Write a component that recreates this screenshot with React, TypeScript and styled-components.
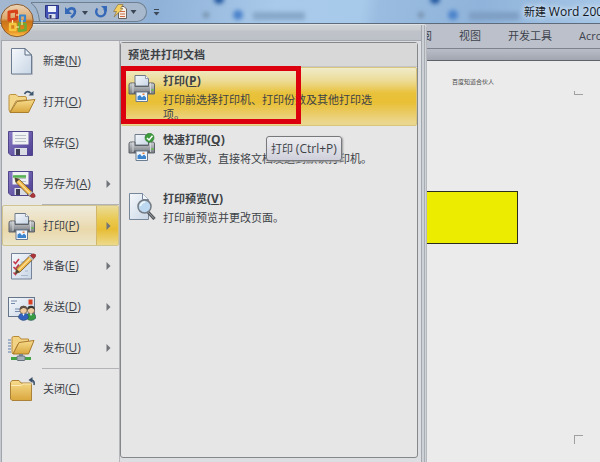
import React from 'react';
import styled, { createGlobalStyle } from 'styled-components';

const GlobalStyle = createGlobalStyle`
  * { box-sizing: border-box; }
  body { margin: 0; }
  body, button {
    font-family: "Open Sans", "Noto Sans CJK SC", sans-serif;
    font-size: 11px;
    color: #3d4247;
  }
  button { margin: 0; padding: 0; border: 0; background: none; text-align: left; }
`;

const Window = styled.div`
  position: relative;
  display: flex;
  flex-direction: column;
  min-height: 100vh;
  overflow: hidden;
  background: #ebebeb;
`;

const TitleBar = styled.header`
  position: relative;
  display: flex;
  align-items: center;
  height: 24px;
  padding-left: 31px;
  border-bottom: 1px solid #5d6b7b;
  background: linear-gradient(100deg, #a3b8d0 0%, #9db4ce 18%, #8fb1d8 26%, #9fc0e2 38%, #a9caea 46%, #a8caea 60%, #9abce0 63%, #8fb3da 80%, #a6c6e6 100%);
  overflow: hidden;
`;

const Glass = styled.svg`
  position: absolute;
  inset: 0;
`;

const QuickBar = styled.nav`
  position: relative;
  display: flex;
  align-items: center;
  flex: none;
  width: 116px;
  height: 20px;
  border: 1px solid #6f7f92;
  border-left: 0;
  border-radius: 0 10px 10px 0;
  background: linear-gradient(90deg, transparent 6px, #a8b9cd 6px);
`;

const BarCurve = styled.svg`
  flex: none;
  margin-right: 3px;
`;

const QuickButton = styled.button<{ $width: number }>`
  display: flex;
  align-items: center;
  justify-content: center;
  width: ${(p) => p.$width}px;
  height: 18px;
`;

const Title = styled.h1`
  position: relative;
  flex: 1;
  margin: 0 0 0 362px;
  font-size: 11px;
  font-weight: 400;
  line-height: 24px;
  white-space: nowrap;
  color: #10161e;
  text-shadow: 0 0 6px #e6f1fb, 0 0 4px #e6f1fb;
`;

const Latin = styled.span`
  font-size: 12px;
`;

const Customize = styled.button`
  position: relative;
  display: flex;
  flex: none;
  width: 9px;
  height: 18px;
  margin-left: 6px;
  align-items: center;
`;

const Tabs = styled.nav`
  display: flex;
  gap: 27px;
  height: 25px;
  padding-left: 410px;
  background: #bcc0ca;
  border-bottom: 1px solid #7d838c;
`;

const Tab = styled.button`
  flex: none;
  line-height: 24px;
  white-space: nowrap;
  color: #3c434d;
`;

const RibbonEdge = styled.div`
  height: 12px;
  background: linear-gradient(#b9bdc7, #a2a6b1);
  border-bottom: 1px solid #5f636a;
`;

const Page = styled.main`
  display: flex;
  flex: 1;
  flex-direction: column;
  align-items: stretch;
  padding: 16px 17px 18px 0;
`;

const PageHeader = styled.div`
  display: flex;
  justify-content: space-between;
  height: 18px;
  padding-left: 452px;
`;

const HeaderText = styled.span`
  font-size: 6px;
  line-height: 10px;
  color: #4a4a4a;
`;

const CropMark = styled.i<{ $corner: 'top' | 'bottom' }>`
  align-self: flex-end;
  width: 9px;
  height: ${(p) => (p.$corner === 'top' ? 4 : 9)}px;
  border-left: 1px solid #a0a0a0;
  border-top: ${(p) => (p.$corner === 'top' ? 0 : 1)}px solid #a0a0a0;
  border-bottom: ${(p) => (p.$corner === 'top' ? 1 : 0)}px solid #a0a0a0;
`;

const Shape = styled.div`
  width: 518px;
  height: 53px;
  margin: 96px 0 auto;
  border: 1px solid #2c2c1c;
  background: #ecec00;
`;

const OfficeMenu = styled.section`
  position: absolute;
  top: 24px;
  bottom: 0;
  left: 0;
  display: flex;
  flex-direction: column;
  width: 427px;
  padding: 0 6px 0 1px;
  border-top: 1px solid #dfe2e5;
  border-radius: 0 4px 0 0;
  background: linear-gradient(90deg, #c6cacf 421px, #a2a8af 421px, #a2a8af 422px, #cdd1d6 422px, #cdd1d6 424px, #a8adb3 424px, #a8adb3 425px, #ced2d6 425px, #ced2d6 426px, #b5b9be 426px);
`;

const MenuTop = styled.div`
  height: 15px;
  background: linear-gradient(#d0d3d6, #c9cccf 5px, #bfc3c9 6px, #bcc1c7);
`;

const MenuBody = styled.div`
  display: grid;
  flex: 1;
  grid-template-columns: 118px 1fr;
  border-top: 1px solid #a4a8ae;
  border-left: 1px solid #a1a5b0;
  background: #dcdee1;
`;

const Commands = styled.ul`
  margin: 0;
  padding: 0;
  list-style: none;
  background: #e6e6e7;
  border-right: 1px solid #b4b6b9;
`;

const CommandRow = styled.li<{ $separated?: boolean }>`
  &::before {
    content: "";
    display: ${(p) => (p.$separated ? 'block' : 'none')};
    height: 1px;
    margin: -1px 0 0 40px;
    background: #b1b3b6;
  }
`;

const Command = styled.button<{ $active?: boolean }>`
  display: grid;
  grid-template-columns: 28px minmax(0, 1fr) 22px;
  column-gap: 7px;
  align-items: center;
  width: 100%;
  height: 41px;
  padding-left: 5px;
  padding-bottom: ${(p) => (p.$active ? 0 : 1)}px;
  border: 1px solid ${(p) => (p.$active ? '#cfc38f' : 'transparent')};
  border-radius: 2px;
  background: ${(p) => (p.$active ? 'linear-gradient(#eeebdc 0, #ecdfbd 40%, #ead8ab 60%, #ebe5c9)' : 'none')};
  line-height: 18px;
  white-space: nowrap;
`;

const ArrowCell = styled.span<{ $active?: boolean }>`
  display: flex;
  align-items: center;
  align-self: stretch;
  padding-left: 9px;
  border-left: 1px solid ${(p) => (p.$active ? '#d2b66a' : 'transparent')};
  background: ${(p) => (p.$active ? 'linear-gradient(#eadb98 0, #e9c950 35%, #e8bd35 60%, #ecd98a)' : 'none')};
`;

const Panel = styled.section`
  margin: 1px 3px 4px 0;
  border: 1px solid #85888b;
  border-radius: 3px;
  background: #e6e6e6;
`;

const PanelTitle = styled.h2`
  height: 24px;
  margin: 0;
  padding-left: 7px;
  border-bottom: 1px solid #c2c4c6;
  background: #d8d8d8;
  font-size: 11px;
  font-weight: 700;
  line-height: 24px;
`;

const EntryWrap = styled.div`
  position: relative;
`;

const Entry = styled.button<{ $active?: boolean }>`
  display: grid;
  grid-template-columns: 28px 1fr;
  column-gap: 7px;
  align-items: start;
  width: 100%;
  height: 59px;
  padding: 4px 34px 0 6px;
  border: 1px solid ${(p) => (p.$active ? '#d9c57c' : 'transparent')};
  border-radius: 2px;
  background: ${(p) => (p.$active ? 'linear-gradient(#f0ebc9 0, #ecdc98 22%, #e9c23c 44%, #e9bf34 60%, #ebd68e 95%)' : 'none')};
`;

const EntryIcon = styled.span`
  display: flex;
  padding-top: 2px;
`;

const EntryName = styled.strong`
  display: block;
  line-height: 17px;
`;

const EntryText = styled.span`
  display: block;
  padding-top: 3px;
  line-height: 15px;
`;

const RedFrame = styled.div`
  position: absolute;
  top: -1px;
  left: 0;
  width: 180px;
  height: 58px;
  border: 5px solid #dc000f;
`;

const Tooltip = styled.div`
  position: absolute;
  top: 10px;
  left: 145px;
  height: 25px;
  padding: 0 4px;
  border: 1px solid #77797d;
  border-radius: 3px;
  background: linear-gradient(#eeeef0, #cfd0db);
  box-shadow: 1px 1px 2px #9a9a9a;
  line-height: 23px;
  white-space: nowrap;
`;

const OfficeButton = styled.button`
  position: absolute;
  top: 3px;
  left: 0;
  width: 34px;
  height: 35px;
`;

const Svg = ({ children, size = 28 }: { children: React.ReactNode; size?: number }) => (
  <svg width={size} height={size} viewBox={`0 0 ${size} ${size}`} aria-hidden="true">{children}</svg>
);

const HiddenDefs = styled.svg`
  position: absolute;
`;

const Gradients = () => (
  <HiddenDefs width="0" height="0" aria-hidden="true">
    <defs>
      <linearGradient id="paper" x2="1" y2="1"><stop stopColor="#f5f8fb" /><stop offset="1" stopColor="#c9d6e6" /></linearGradient>
      <linearGradient id="folder" x2="0" y2="1"><stop stopColor="#f8dc8e" /><stop offset="1" stopColor="#d9a73d" /></linearGradient>
      <linearGradient id="violet" x2="1" y2="1"><stop stopColor="#8a7cc6" /><stop offset="1" stopColor="#4c3d91" /></linearGradient>
      <linearGradient id="metal" x2="0" y2="1"><stop stopColor="#cdd0d3" /><stop offset=".5" stopColor="#a2a6aa" /><stop offset="1" stopColor="#777c81" /></linearGradient>
      <linearGradient id="orb" x2="0" y2="1"><stop stopColor="#ecd6b8" /><stop offset=".45" stopColor="#dba66a" /><stop offset=".52" stopColor="#c9741c" /><stop offset=".8" stopColor="#e2851b" /><stop offset="1" stopColor="#ffc850" /></linearGradient>
    </defs>
  </HiddenDefs>
);

const Pencil = ({ x = 0, y = 0 }: { x?: number; y?: number }) => (
  <g transform={`translate(${x} ${y})`}>
    <path d="M0 0 L1 4.6 L14.5 18 L18 14.7 L4.4 1.4Z" fill="#eeb443" stroke="#6b5127" strokeWidth=".8" />
    <path d="M2.6 2.9 L16 16.2" stroke="#fbe09a" strokeWidth="1.3" />
    <path d="M0 0 L1 4.6 L4.4 1.4Z" fill="#4b4135" />
    <path d="M13.2 16.7 L16.7 13.3 L18 14.7 L14.5 18Z" fill="#b4c0c8" />
    <path d="M14.8 18 L18 14.8 Q21 16.5 20 19 Q17 21 14.8 18Z" fill="#ad3439" stroke="#7d2a2e" strokeWidth=".5" />
  </g>
);

const NewIcon = () => (
  <Svg>
    <path d="M3.5 1.5H17L23.5 8V27H3.5Z" fill="url(#paper)" stroke="#6d7c90" />
    <path d="M17 1.5V8H23.5Z" fill="#e9f0f7" stroke="#5d6d82" />
    <path d="M4 27.5H24.5V9" fill="none" stroke="#9aa2ac" strokeWidth=".6" />
  </Svg>
);

const OpenIcon = () => (
  <Svg>
    <path d="M1 22V8Q1 6.500 2.500 6.500H8L10 8.500H17Q18.500 8.500 18.500 10V12L8 13L2 24Z" fill="#f3d588" stroke="#bc9140" />
    <path d="M2 24.500L9 13.500L27 11.500L20.500 24.500Z" fill="url(#folder)" stroke="#a97e2d" />
    <path d="M16.500 6Q19 1.500 23.500 5.500" fill="none" stroke="#3e566f" strokeWidth="1.600" />
    <path d="M20.500 7.500H25.500V3Z" fill="#3e566f" />
  </Svg>
);

const Disk = () => (
  <>
    <path d="M.5 2.500H24.500V26.500H3L.5 24Z" fill="url(#violet)" stroke="#51458b" />
    <rect x="4.500" y="3" width="16" height="12.500" fill="#f0f1f3" />
    <path d="M7 6.500H18M7 9.500H18M7 12.500H18" stroke="#b9bfc7" />
    <rect x="6.500" y="19" width="12.500" height="7" fill="#d9dde3" />
    <rect x="8" y="20" width="4" height="6" fill="#3f3d59" />
  </>
);

const SaveIcon = () => <Svg><Disk /></Svg>;

const SaveAsIcon = () => (
  <Svg>
    <g transform="translate(0 -1)"><Disk /><path d="M5 7.500H18" stroke="#57b452" strokeWidth="2.500" /></g>
    <Pencil x={7} y={8} />
  </Svg>
);

const Printer = () => (
  <>
    <path d="M7 12V1.500H17.500L20.500 4.500V12Z" fill="url(#paper)" stroke="#6e7a88" />
    <path d="M17.500 1.500V4.500H20.500" fill="#fff" stroke="#6e7a88" strokeWidth=".7" />
    <path d="M2.500 9H7V12.500H20.500V9H25Q26.500 9 26.500 11V20H1V11Q1 9 2.500 9Z" fill="url(#metal)" stroke="#5e6368" />
    <path d="M5 9V19M22.500 9V19" stroke="#dfe2e4" strokeWidth=".8" />
    <rect x="23.500" y="15" width="2" height="2" fill="#67c04a" />
    <path d="M6 17.500H21.500L22 20H5.500Z" fill="#5a5f65" />
    <path d="M8 18H19.500V27.500H8Z" fill="#eff5fb" stroke="#6d7d90" />
    <path d="M9.500 26V22.500L12 21L14 23.500L16 21.500L18 23.500V26Z" fill="#3a83cd" />
    <rect x="14.500" y="19.500" width="2" height="1.500" fill="#e8823c" />
  </>
);

const PrintIcon = () => <Svg><Printer /></Svg>;

const QuickPrintIcon = () => (
  <Svg>
    <Printer />
    <circle cx="21.500" cy="4.800" r="4.500" fill="#3c9b3c" stroke="#287a2c" strokeWidth=".6" />
    <path d="M19 5L21 7L24.500 2.800" fill="none" stroke="#fff" strokeWidth="1.500" />
  </Svg>
);

const PreviewIcon = () => (
  <Svg>
    <path d="M1.500 1.500H14.500L20.500 7.500V27.500H1.500Z" fill="url(#paper)" stroke="#78869a" />
    <path d="M14.500 1.500V7.500H20.500" fill="#f3f6fa" stroke="#78869a" />
    <path d="M20 20L26.500 27" stroke="#50555a" strokeWidth="3.200" />
    <path d="M20 20L26 26.500" stroke="#a1a7ac" strokeWidth="1" />
    <circle cx="16.500" cy="14.500" r="6.500" fill="#bcd9f1" stroke="#747b83" strokeWidth="1.500" />
    <path d="M12.500 14Q13 10.500 17 10" fill="none" stroke="#f3faff" strokeWidth="1.600" />
  </Svg>
);

const PrepareIcon = () => (
  <Svg>
    <path d="M3.500 1.500H23.500V27H3.500Z" fill="url(#paper)" stroke="#75839a" />
    <path d="M5.500 9.500L7.500 11.500L11 7M5.500 15L7.500 17L11 12.500M5.500 20.500L7.500 22.500L10 18.500" fill="none" stroke="#c4384b" strokeWidth="1.600" />
    <path d="M12.500 10H17M17 19H20M13 23.500H20" stroke="#aab8cb" />
    <g transform="translate(7.500 21.500) scale(1 -1)"><Pencil /></g>
  </Svg>
);

const Person = ({ x, color, hair }: { x: number; color: string; hair: string }) => (
  <g transform={`translate(${x} 0)`}>
    <path d="M0 25Q0 20 5 20T10 25Q5 30 0 25Z" fill={color} stroke="#284568" strokeWidth=".5" />
    <circle cx="5" cy="17" r="3.700" fill="#edcaa0" stroke="#5a452f" strokeWidth=".6" />
    <path d="M1.300 17Q1 12.800 5 12.800T8.700 17Q7 14.500 4.500 15Z" fill={hair} />
    <path d="M3.800 20.500L5 23L6.200 20.500Z" fill="#fff" />
  </g>
);

const SendIcon = () => (
  <Svg>
    <rect x=".5" y="4.500" width="26" height="19" fill="url(#paper)" stroke="#67758b" />
    <path d="M3 8H9M3 10.500H7M7 16H15M7 18.500H12" stroke="#7589ab" strokeWidth="1.200" />
    <rect x="20.500" y="6.500" width="4" height="5" fill="#d93e22" />
    <Person x={18} color="#379b43" hair="#393736" />
    <Person x={10.500} color="#3261be" hair="#5b5147" />
  </Svg>
);

const PublishIcon = () => (
  <Svg>
    <path d="M0 6H3M0 9H3M0 12H3M0 15H3M0 18H3" stroke="#5c7da8" strokeWidth="1.200" />
    <path d="M4 19V4Q4 2.500 5.500 2.500H11L13 5H20.500V9L10 10L5 20Z" fill="#f2d384" stroke="#b98a36" />
    <path d="M5 20L11 8.500L26 6.500L20.500 20Z" fill="url(#folder)" stroke="#a8792d" />
    <path d="M13 20V24" stroke="#7d8790" strokeWidth="4" />
    <path d="M3 24.500H23" stroke="#43a446" strokeWidth="3" />
    <rect x="9" y="22" width="8" height="4.500" rx="1" fill="#a5b0ba" stroke="#66727d" />
  </Svg>
);

const CloseIcon = () => (
  <Svg>
    <path d="M2.500 24V7.500L4 5.500H11L13 8H22Q23.500 8 23.500 9.500V25.500H4Z" fill="url(#folder)" stroke="#ab8238" />
    <path d="M3 10.500H13L15 9H23" fill="none" stroke="#fbeab2" />
    <path d="M26 10Q27 5.500 23 5" fill="none" stroke="#3b5068" strokeWidth="1.600" />
    <path d="M20.500 5L24.500 2V8Z" fill="#3b5068" />
  </Svg>
);

const OfficeLogo = () => (
  <svg width="34" height="35" viewBox="0 0 34 35" aria-hidden="true">
    <circle cx="17" cy="17.500" r="16.200" fill="url(#orb)" stroke="#8b5b31" strokeWidth="1" />
    <g fill="none" strokeLinejoin="round">
      <path d="M9 9L16.500 8V16L9 17Z" stroke="#d8421b" strokeWidth="3" />
      <path d="M20 12.500H25V18H20Z" stroke="#3b85ca" strokeWidth="2.200" />
      <path d="M10 21H15.500V27H10Z" stroke="#f5c63f" strokeWidth="2.400" />
      <path d="M19 20.500L25.500 21V27L19 28Z" stroke="#70a934" strokeWidth="2.600" />
      <path d="M16 12H19M22 17V22M12.500 17V20M16 24H19" stroke="#fff0ba" strokeWidth="1.200" />
    </g>
  </svg>
);

const Arrow = () => <svg width="5" height="8" viewBox="0 0 5 8" aria-hidden="true"><path d="M.5 0L4.500 4L.5 8Z" fill="#707478" /></svg>;

const commands = [
  { name: '新建', key: 'N', icon: <NewIcon /> },
  { name: '打开', key: 'O', icon: <OpenIcon /> },
  { name: '保存', key: 'S', icon: <SaveIcon /> },
  { name: '另存为', key: 'A', icon: <SaveAsIcon />, arrow: true },
  { name: '打印', key: 'P', icon: <PrintIcon />, arrow: true, active: true, separated: true },
  { name: '准备', key: 'E', icon: <PrepareIcon />, arrow: true },
  { name: '发送', key: 'D', icon: <SendIcon />, arrow: true },
  { name: '发布', key: 'U', icon: <PublishIcon />, arrow: true },
  { name: '关闭', key: 'C', icon: <CloseIcon />, separated: true },
];

const entries = [
  { name: '打印', key: 'P', text: '打印前选择打印机、打印份数及其他打印选项。', icon: <PrintIcon />, active: true },
  { name: '快速打印', key: 'Q', text: '不做更改，直接将文档发送到默认打印机。', icon: <QuickPrintIcon />, tip: true },
  { name: '打印预览', key: 'V', text: '打印前预览并更改页面。', icon: <PreviewIcon /> },
];

export default function App() {
  return (
    <Window>
      <GlobalStyle />
      <Gradients />
      <TitleBar>
        <Glass width="100%" height="24" aria-hidden="true">
          <defs><filter id="soft" x="-50%" y="-80%" width="200%" height="260%"><feGaussianBlur stdDeviation="2" /></filter></defs>
          <g filter="url(#soft)">
            <circle cx="219" cy="-1" r="5" fill="#2458a0" /><circle cx="435" cy="-1" r="5" fill="#2458a0" />
            <circle cx="238" cy="15" r="5" fill="#4b83cc" /><circle cx="453" cy="15" r="5" fill="#4b83cc" />
            <circle cx="206" cy="15" r="3" fill="#7590ac" /><circle cx="421" cy="15" r="3" fill="#7590ac" />
            <rect x="253" y="12" width="52" height="8" fill="#88a8ca" /><rect x="469" y="12" width="50" height="8" fill="#7f9fc4" />
          </g>
        </Glass>
        <QuickBar aria-label="快速访问工具栏">
          <BarCurve width="10" height="18" viewBox="0 0 10 18" aria-hidden="true">
            <path d="M0 0H1Q7 4 8.500 18H10V0Z" fill="#a8b9cd" /><path d="M0 0Q7 4 8.500 18" fill="none" stroke="#6f7f92" />
          </BarCurve>
          <QuickButton $width={16} aria-label="保存">
            <svg width="14" height="14" viewBox="0 0 14 14"><path d="M.5.5H13.500V13.500H2L.5 12Z" fill="#4352b5" stroke="#2b3480" /><rect x="3" y="1" width="8" height="6" fill="#edf2fa" /><rect x="3.500" y="9" width="7" height="4.500" fill="#dce2ec" /><rect x="4.500" y="10" width="2" height="3.500" fill="#29305f" /></svg>
          </QuickButton>
          <QuickButton $width={34} aria-label="撤消">
            <svg width="28" height="14" viewBox="0 0 28 14"><path d="M4 6.500Q7 2 11 4Q14 8 8 12.500" fill="none" stroke="#3569b8" strokeWidth="2.600" /><path d="M2 2V9H9Z" fill="#3569b8" /><path d="M19 6H25L22 10Z" fill="#3b4654" /></svg>
          </QuickButton>
          <QuickButton $width={14} aria-label="恢复">
            <svg width="14" height="14" viewBox="0 0 14 14"><path d="M3.500 3.500A4.600 4.600 0 1 0 10 3.500" fill="none" stroke="#3569b8" strokeWidth="2.400" /><path d="M7 1H13V7Z" fill="#3569b8" /></svg>
          </QuickButton>
          <QuickButton $width={34} aria-label="快速打印">
            <svg width="24" height="16" viewBox="0 0 24 16"><path d="M5.500 2.500H11L13.500 5V14.500H5.500Z" fill="#f5f0e8" stroke="#6a625e" /><path d="M7 7.500H12M7 10H12M7 12.500H12" stroke="#d06a43" /><path d="M5 .5H10L7.500 4.500H10L1 13L3.500 7.500H.5Z" fill="#f6cf62" stroke="#8a7445" strokeWidth=".7" /><path d="M17.500 6H23.500L20.500 10Z" fill="#3b4654" /></svg>
          </QuickButton>
        </QuickBar>
        <Customize aria-label="自定义快速访问工具栏">
          <svg width="7" height="8" viewBox="0 0 7 8"><path d="M1 1.500H6" stroke="#3d4958" /><path d="M.5 4H6.500L3.500 7.500Z" fill="#3d4958" /></svg>
        </Customize>
        <Title>新建 <Latin>Word 200</Latin></Title>
      </TitleBar>
      <Tabs aria-label="功能区">
        {['审阅', '视图', '开发工具', 'Acrobat'].map((t) => <Tab key={t}>{t}</Tab>)}
      </Tabs>
      <RibbonEdge />
      <Page>
        <PageHeader>
          <HeaderText>百度知道合伙人</HeaderText>
          <CropMark $corner="top" />
        </PageHeader>
        <Shape />
        <CropMark $corner="bottom" />
      </Page>
      <OfficeMenu>
        <MenuTop />
        <MenuBody>
          <Commands>
            {commands.map((c) => (
              <CommandRow key={c.key} $separated={c.separated}>
                <Command $active={c.active}>
                  {c.icon}
                  <span>{c.name}<Latin>(<u>{c.key}</u>)</Latin></span>
                  <ArrowCell $active={c.active}>{c.arrow && <Arrow />}</ArrowCell>
                </Command>
              </CommandRow>
            ))}
          </Commands>
          <Panel>
            <PanelTitle>预览并打印文档</PanelTitle>
            {entries.map((e) => (
              <EntryWrap key={e.key}>
                <Entry $active={e.active}>
                  <EntryIcon>{e.icon}</EntryIcon>
                  <span>
                    <EntryName>{e.name}<Latin>(<u>{e.key}</u>)</Latin></EntryName>
                    <EntryText>{e.text}</EntryText>
                  </span>
                </Entry>
                {e.active && <RedFrame />}
                {e.tip && <Tooltip role="tooltip">打印 <Latin>(Ctrl+P)</Latin></Tooltip>}
              </EntryWrap>
            ))}
          </Panel>
        </MenuBody>
      </OfficeMenu>
      <OfficeButton aria-label="Office 按钮"><OfficeLogo /></OfficeButton>
    </Window>
  );
}
